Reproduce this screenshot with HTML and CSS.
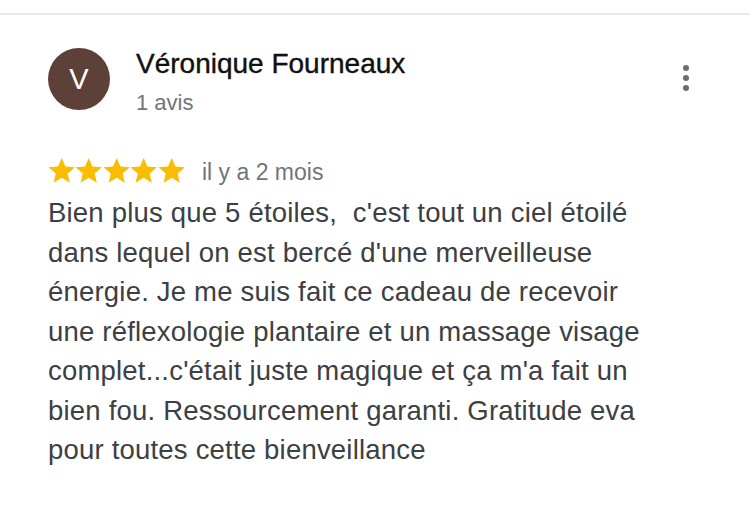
FILE: index.html
```html
<!DOCTYPE html>
<html lang="fr">
<head>
    <meta charset="UTF-8">
    <meta name="viewport" content="width=device-width, initial-scale=1.0">
    <title>Avis</title>
    <link rel="stylesheet" href="styles.css">
</head>
<body>
    <div class="review">
        <div class="header">
            <div class="avatar">V</div>
            <div class="author">
                <div class="name">Véronique Fourneaux</div>
                <div class="count">1 avis</div>
            </div>
            <div class="menu">
                <span class="dot"></span>
                <span class="dot"></span>
                <span class="dot"></span>
            </div>
        </div>
        <div class="rating">
            <div class="stars">
                <svg viewBox="0 0 24 24"><path d="M12 .8l3.3 7.7 8.4.7-6.4 5.5 1.9 8.2L12 18.5l-7.2 4.4 1.9-8.2L.3 9.2l8.4-.7z"/></svg>
                <svg viewBox="0 0 24 24"><path d="M12 .8l3.3 7.7 8.4.7-6.4 5.5 1.9 8.2L12 18.5l-7.2 4.4 1.9-8.2L.3 9.2l8.4-.7z"/></svg>
                <svg viewBox="0 0 24 24"><path d="M12 .8l3.3 7.7 8.4.7-6.4 5.5 1.9 8.2L12 18.5l-7.2 4.4 1.9-8.2L.3 9.2l8.4-.7z"/></svg>
                <svg viewBox="0 0 24 24"><path d="M12 .8l3.3 7.7 8.4.7-6.4 5.5 1.9 8.2L12 18.5l-7.2 4.4 1.9-8.2L.3 9.2l8.4-.7z"/></svg>
                <svg viewBox="0 0 24 24"><path d="M12 .8l3.3 7.7 8.4.7-6.4 5.5 1.9 8.2L12 18.5l-7.2 4.4 1.9-8.2L.3 9.2l8.4-.7z"/></svg>
            </div>
            <span class="date">il y a 2 mois</span>
        </div>
        <p class="text">Bien plus que 5 étoiles,&nbsp; c'est tout un ciel étoilé dans lequel on est bercé d'une merveilleuse énergie. Je me suis fait ce cadeau de recevoir une réflexologie plantaire et un massage visage complet...c'était juste magique et ça m'a fait un bien fou. Ressourcement garanti. Gratitude eva pour toutes cette bienveillance</p>
    </div>
</body>
</html>
```

FILE: styles.css
```css
body {
    margin: 0;
    background-color: #fff;
    font-family: "Liberation Sans", Arial, sans-serif;
}

.review {
    border-top: 2px solid #e8e8e8;
    margin-top: 13px;
    padding: 33px 48px 0 48px;
}

.header {
    display: flex;
    align-items: flex-start;
}

.avatar {
    width: 62px;
    height: 62px;
    border-radius: 50%;
    background-color: #5d4037;
    color: #fff;
    font-size: 29px;
    display: flex;
    align-items: center;
    justify-content: center;
    flex-shrink: 0;
}

.author {
    margin-left: 26px;
    flex: 1;
}

.name {
    font-size: 28px;
    line-height: 32px;
    color: #111;
    -webkit-text-stroke: 0.4px #111;
}

.count {
    font-size: 22px;
    line-height: 26px;
    color: #70757a;
    margin-top: 10px;
}

.menu {
    display: flex;
    flex-direction: column;
    gap: 4px;
    margin-top: 17px;
    margin-right: 13px;
}

.dot {
    width: 6px;
    height: 6px;
    border-radius: 50%;
    background-color: #6e6e6e;
}

.rating {
    display: flex;
    align-items: center;
    margin-top: 38px;
}

.stars {
    display: flex;
}

.stars svg {
    width: 27.4px;
    height: 27px;
    fill: #fbbc04;
}

.date {
    font-size: 23px;
    color: #70757a;
    margin-left: 17px;
    padding-top: 5px;
}

.text {
    margin: 7px 0 0 0;
    font-size: 27.5px;
    line-height: 39.5px;
    letter-spacing: 0.2px;
    color: #3c4043;
    max-width: 612px;
}
```
